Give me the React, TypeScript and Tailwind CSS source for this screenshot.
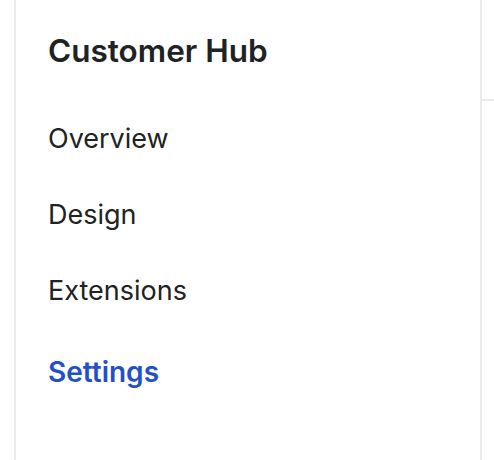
export default function App() {
  const items = ["Overview", "Design", "Extensions"];
  return (
    <div className="flex h-[460px] w-[494px] bg-white font-['Inter',sans-serif] text-[#202223]">
      <div className="ml-[14px] h-full w-[468px] border-x-2 border-[#ebebeb] pl-[32px] pt-[31px]">
        <h1 className="text-[31.5px] font-semibold leading-[40px]">Customer Hub</h1>
        <nav className="mt-[50px] flex flex-col">
          {items.map((item) => (
            <a key={item} className="h-[76px] text-[27px] leading-[36px]">
              {item}
            </a>
          ))}
          <a className="mt-[5px] text-[28px] font-semibold leading-[36px] text-[#2350c7]">
            Settings
          </a>
        </nav>
      </div>
      <div className="mt-[99px] h-[2px] flex-1 bg-[#ebebeb]" />
    </div>
  );
}
